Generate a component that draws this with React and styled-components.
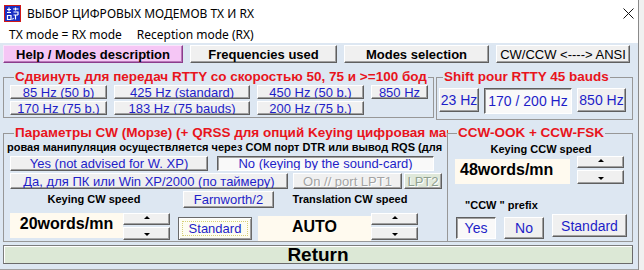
import React from 'react';
import styled, { createGlobalStyle, css } from 'styled-components';

const Global = createGlobalStyle`
  html, body { margin: 0; padding: 0; background: #f0f0f0; }
  body { width: 644px; height: 270px; overflow: hidden; font-family: "Liberation Sans", Arial, sans-serif; }
  * { box-sizing: border-box; }
`;

const Window = styled.div`
  width: 639px;
  height: 270px;
  background: #fff;
  border-right: 1px solid #8a8a8a;
  display: flex;
  flex-direction: column;
  overflow: hidden;
`;

const TitleBar = styled.div`
  height: 26px;
  flex: none;
  display: flex;
  align-items: center;
  padding-left: 4px;
  padding-right: 4px;
  font-family: "Noto Sans", "Segoe UI", sans-serif;
  font-size: 12px;
  color: #000;
`;

const TitleText = styled.span`
  margin-left: 6px;
  flex: 1;
  white-space: nowrap;
`;

const MenuBar = styled.div`
  height: 17px;
  flex: none;
  display: flex;
  align-items: center;
  gap: 15px;
  padding-left: 9px;
  font-family: "Noto Sans", "Segoe UI", sans-serif;
  font-size: 12px;
  color: #000;
`;

const Client = styled.div`
  flex: 1;
  background: #dde7f2;
  padding: 2px 0 0 3px;
  display: flex;
  flex-direction: column;
  border-bottom: 1px solid #a0a0a0;
`;

const Row = styled.div`
  display: flex;
  align-items: ${p => p.$align || 'flex-start'};
  gap: ${p => p.$gap ?? 0}px;
  margin-top: ${p => p.$mt ?? 0}px;
  margin-left: ${p => p.$ml ?? 0}px;
`;

const Btn = styled.button`
  flex: none;
  width: ${p => p.$w}px;
  height: ${p => p.$h || 15}px;
  margin: 0;
  margin-top: ${p => p.$mt ?? 0}px;
  margin-left: ${p => p.$ml ?? 0}px;
  padding: 0;
  font-family: "Liberation Sans", Arial, sans-serif;
  font-size: ${p => p.$fs || 13}px;
  font-weight: ${p => (p.$bold ? 700 : 400)};
  color: ${p => p.$color || '#1e1ec8'};
  background: #f0f0f0;
  border: 1px solid;
  border-color: #fff #5f5f5f #5f5f5f #fff;
  box-shadow: inset -1px -1px 0 #a0a0a0;
  line-height: 1;
  white-space: nowrap;
  overflow: hidden;
  display: flex;
  align-items: center;
  justify-content: center;
  ${p => p.$variant === 'pink' && css`
    background: #f5c6f5;
    border-color: #fbe4fb #8c3c8c #8c3c8c #fbe4fb;
    box-shadow: inset -1px -1px 0 #b878b8;
  `}
  ${p => p.$variant === 'sunken' && css`
    background: #f9f9f9;
    border-color: #5f5f5f #fff #fff #5f5f5f;
    box-shadow: inset 1px 1px 0 #a0a0a0;
  `}
  ${p => p.$variant === 'disabled' && css`
    color: #a3a3a3;
    text-shadow: 1px 1px 0 #fff;
  `}
  ${p => p.$variant === 'green' && css`
    background: #dfe8da;
    color: #8fa08f;
    text-shadow: 1px 1px 0 #fff;
  `}
  ${p => p.$variant === 'focus' && css`
    background: #fdfdf2;
    border-color: #6a6a6a;
    box-shadow: inset 1px 1px 0 #fff, inset -1px -1px 0 #a0a0a0;
  `}
`;

const FocusRect = styled.span`
  display: flex;
  align-items: center;
  justify-content: center;
  width: calc(100% - 6px);
  height: calc(100% - 6px);
  border: 1px dotted #d6cf78;
`;

const Group = styled.fieldset`
  flex: none;
  margin: 0;
  padding: ${p => p.$pad || '0 0 0 6px'};
  width: ${p => p.$w}px;
  max-width: ${p => p.$w}px;
  height: ${p => p.$h}px;
  min-width: 0;
  border: 1px solid #979797;
  ${p => p.$noRight && css`border-right: none;`}
  overflow: hidden;
  contain: inline-size;
`;

const Legend = styled.legend`
  padding: 0 1px;
  margin-left: ${p => p.$ml ?? 4}px;
  color: #e8141c;
  font-family: "Liberation Sans", Arial, sans-serif;
  font-weight: 700;
  font-size: 13.5px;
  line-height: 14px;
  height: 14px;
  white-space: nowrap;
  overflow: hidden;
  ${p => p.$width && css`width: ${p.$width}px;`}
`;

const InfoLine = styled.div`
  margin-left: -3px;
  margin-top: 1px;
  width: 436px;
  height: 13px;
  line-height: 13px;
  font-size: 11px;
  font-weight: 700;
  color: #000;
  white-space: nowrap;
  overflow: hidden;
`;

const Label = styled.div`
  flex: none;
  width: ${p => (p.$w ? `${p.$w}px` : 'auto')};
  margin-top: ${p => p.$mt ?? 0}px;
  margin-left: ${p => p.$ml ?? 0}px;
  text-align: ${p => p.$align || 'center'};
  font-size: 11px;
  font-weight: 700;
  line-height: 13px;
  color: #000;
  white-space: nowrap;
`;

const NumBox = styled.div`
  flex: none;
  width: ${p => p.$w}px;
  height: ${p => p.$h}px;
  margin-top: ${p => p.$mt ?? 0}px;
  margin-left: ${p => p.$ml ?? 0}px;
  background: #fffaef;
  display: flex;
  align-items: center;
  justify-content: ${p => (p.$left ? 'flex-start' : 'center')};
  padding-left: ${p => (p.$left ? 5 : 0)}px;
  padding-bottom: ${p => p.$pb ?? 3}px;
  font-size: 16px;
  font-weight: 700;
  color: #000;
`;

const SpinCol = styled.div`
  flex: none;
  display: flex;
  flex-direction: column;
  gap: 2px;
  margin-top: ${p => p.$mt ?? 0}px;
`;

const Tri = styled.span`
  width: 0;
  height: 0;
  border-left: 3px solid transparent;
  border-right: 3px solid transparent;
  ${p => (p.$down
    ? css`border-top: 3px solid #000; margin-top: 2px;`
    : css`border-bottom: 3px solid #000; margin-bottom: 3px;`)}
`;

const ReturnBar = styled.div`
  width: 630px;
  height: 19px;
  margin-top: 3px;
  background: #dce8d6;
  border: 1px solid;
  border-color: #7c7c7c #6a6a6a #6a6a6a #7c7c7c;
  box-shadow: inset 1px 1px 0 #fff;
  display: flex;
  align-items: center;
  justify-content: center;
  font-size: 19px;
  font-weight: 700;
  color: #000;
  line-height: 1;
`;

const Spin = ({ w = 47, up = 12, down = 12, mt }) => (
  <SpinCol $mt={mt}>
    <Btn $w={w} $h={up}><Tri /></Btn>
    <Btn $w={w} $h={down}><Tri $down /></Btn>
  </SpinCol>
);

const AppIcon = () => (
  <svg width="17" height="17" viewBox="0 0 17 17">
    <rect x="0.5" y="0.5" width="16" height="16" fill="#1a2fc4" stroke="#d01818" />
    <g stroke="#fff" strokeWidth="1.2" fill="none">
      <path d="M3 4.5h4M5 2.5v4M3 7.5h4M3.5 10.5h3.5v4h-3.5z" />
      <path d="M9 4h5.5M11.5 2.5v3M9.5 7h4.5v3M9.5 10h4.5M11.5 10v4.5M9.5 13l-1 1.5" />
    </g>
  </svg>
);

const CloseIcon = () => (
  <svg width="11" height="11" viewBox="0 0 11 11">
    <path d="M0.5 0.5L10.5 10.5M10.5 0.5L0.5 10.5" stroke="#111" strokeWidth="1" />
  </svg>
);

export default function App() {
  return (
    <>
      <Global />
      <Window>
        <TitleBar>
          <AppIcon />
          <TitleText>ВЫБОР ЦИФРОВЫХ МОДЕМОВ TX И RX</TitleText>
          <CloseIcon />
        </TitleBar>
        <MenuBar>
          <span>TX mode = RX mode</span>
          <span>Reception mode (RX)</span>
        </MenuBar>
        <Client>
          <Row $gap={7}>
            <Btn $w={180} $h={18} $bold $color="#000" $variant="pink">Help / Modes description</Btn>
            <Btn $w={147} $h={18} $bold $color="#000">Frequencies used</Btn>
            <Btn $w={145} $h={18} $bold $color="#000">Modes selection</Btn>
            <Btn $w={134} $h={18} $color="#000">CW/CCW &lt;----&gt; ANSI</Btn>
          </Row>

          <Row $gap={2} $mt={7}>
            <Group $w={431} $h={48}>
              <Legend>Сдвинуть для передач RTTY со скоростью 50, 75 и &gt;=100 бод</Legend>
              <Row $gap={7} $mt={1}>
                <Btn $w={97} $h={14}>85 Hz (50 b)</Btn>
                <Btn $w={136} $h={14}>425 Hz (standard)</Btn>
                <Btn $w={107} $h={14}>450 Hz (50 b.)</Btn>
                <Btn $w={57} $h={14}>850 Hz</Btn>
              </Row>
              <Row $gap={7} $mt={2}>
                <Btn $w={97} $h={14}>170 Hz (75 b.)</Btn>
                <Btn $w={136} $h={14}>183 Hz (75 bauds)</Btn>
                <Btn $w={107} $h={14}>200 Hz (75 b.)</Btn>
              </Row>
            </Group>
            <Group $w={197} $h={50} $pad="0 0 0 2px">
              <Legend>Shift pour RTTY 45 bauds</Legend>
              <Row $gap={5} $mt={4}>
                <Btn $w={40} $h={24} $fs={14}>23 Hz</Btn>
                <Btn $w={88} $h={26} $fs={14} $variant="sunken">170 / 200 Hz</Btn>
                <Btn $w={49} $h={24} $fs={14}>850 Hz</Btn>
              </Row>
            </Group>
          </Row>

          <Row $mt={6}>
            <Group $w={444} $h={116} $noRight>
              <Legend $width={434}>Параметры CW (Морзе) (+ QRSS для опций Keying цифровая мани</Legend>
              <InfoLine>ровая манипуляция осуществляется через COM порт DTR или вывод RQS (для</InfoLine>
              <Row $gap={9} $mt={2}>
                <Btn $w={198} $h={15}>Yes (not advised for W. XP)</Btn>
                <Btn $w={217} $h={15} $variant="sunken">No (keying by the sound-card)</Btn>
              </Row>
              <Row $mt={2}>
                <Btn $w={278} $h={16}>Да, для ПК или Win XP/2000 (по таймеру)</Btn>
                <Btn $w={109} $h={16} $ml={5} $variant="disabled">On // port LPT1</Btn>
                <Btn $w={38} $h={16} $ml={2} $variant="green">LPT2</Btn>
              </Row>
              <Row $mt={2}>
                <Label $w={168} $mt={2}>Keying CW speed</Label>
                <Btn $w={91} $h={17} $ml={5}>Farnworth/2</Btn>
                <Label $w={140} $mt={2} $ml={6}>Translation CW speed</Label>
              </Row>
              <Row $mt={5}>
                <NumBox $w={113} $h={25}>20words/mn</NumBox>
                <Spin up={12} down={13} />
                <Btn $w={74} $h={23} $mt={4} $ml={8} $variant="focus">
                  <FocusRect>Standard</FocusRect>
                </Btn>
                <NumBox $w={113} $h={25} $mt={3} $ml={6}>AUTO</NumBox>
                <Spin up={12} down={13} />
              </Row>
            </Group>
            <Group $w={186} $h={116} $pad="0 0 0 7px">
              <Legend $ml={2}>CCW-OOK + CCW-FSK</Legend>
              <Label $w={172} $mt={3}>Keying CCW speed</Label>
              <Row $gap={7}>
                <NumBox $w={115} $h={25} $mt={3} $left>48words/mn</NumBox>
                <Spin up={12} down={14} />
              </Row>
              <Label $align="left" $ml={10} $mt={15}>"CCW " prefix</Label>
              <Row $gap={8} $mt={2} $ml={1}>
                <Btn $w={40} $h={22} $mt={3} $fs={14} $variant="sunken">Yes</Btn>
                <Btn $w={40} $h={22} $mt={3} $fs={14}>No</Btn>
                <Btn $w={75} $h={23} $fs={14}>Standard</Btn>
              </Row>
            </Group>
          </Row>

          <ReturnBar>Return</ReturnBar>
        </Client>
      </Window>
    </>
  );
}
